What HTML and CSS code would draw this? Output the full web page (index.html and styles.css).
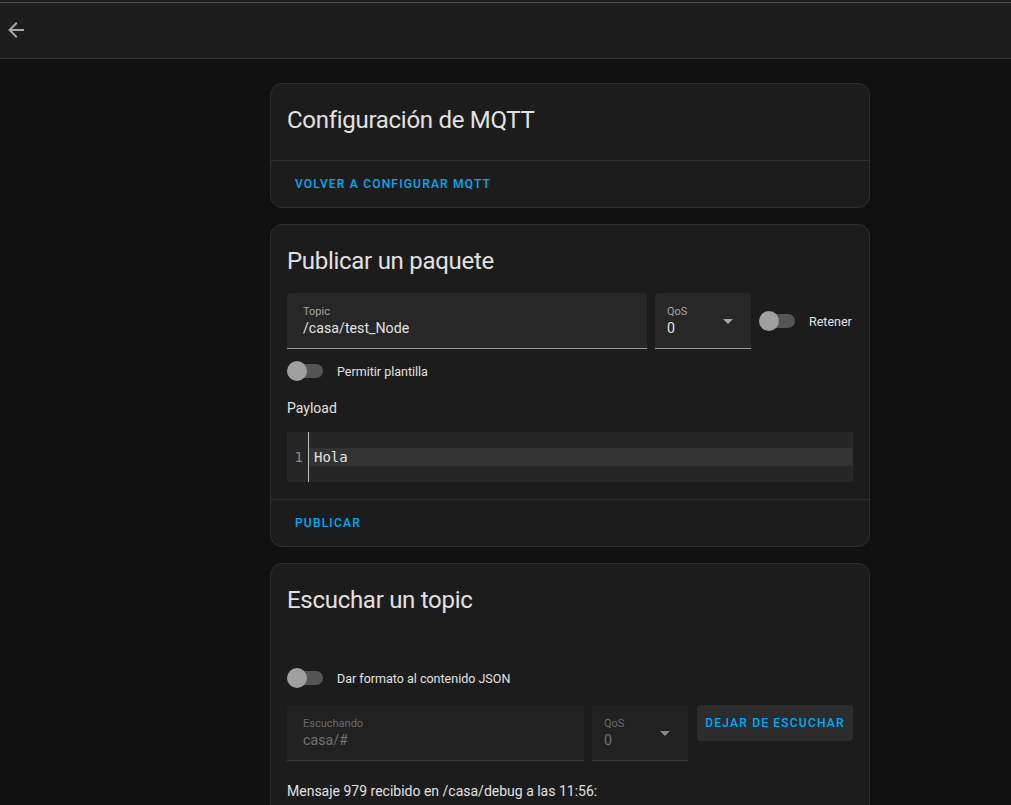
FILE: index.html
```html
<!DOCTYPE html>
<html lang="es">
<head>
<meta charset="utf-8">
<title>MQTT</title>
<link rel="stylesheet" href="styles.css">
</head>
<body>
<div class="topline"></div>
<header class="toolbar">
  <button class="icon-btn" aria-label="Atrás">
    <svg viewBox="0 0 24 24" width="24" height="24"><path d="M20,11V13H8L13.5,18.5L12.08,19.92L4.16,12L12.08,4.08L13.5,5.5L8,11H20Z"/></svg>
  </button>
</header>
<main class="content">
  <section class="card">
    <div class="card-header">Configuración de MQTT</div>
    <div class="card-actions"><span class="btn">Volver a configurar MQTT</span></div>
  </section>

  <section class="card">
    <div class="card-header with-content">Publicar un paquete</div>
    <div class="card-content publish">
      <div class="row">
        <div class="field topic">
          <span class="field-label">Topic</span>
          <span class="field-value">/casa/test_Node</span>
        </div>
        <div class="field qos">
          <span class="field-label">QoS</span>
          <span class="field-value">0</span>
          <span class="arrow"></span>
        </div>
        <div class="switch-row">
          <span class="switch"><span class="track"></span><span class="thumb"></span></span>
          <span class="switch-label retain">Retener</span>
        </div>
      </div>
      <div class="switch-row template">
        <span class="switch"><span class="track"></span><span class="thumb"></span></span>
        <span class="switch-label">Permitir plantilla</span>
      </div>
      <p class="payload-label">Payload</p>
      <div class="editor">
        <div class="gutter">1</div>
        <div class="lines"><div class="line active">Hola</div></div>
      </div>
    </div>
    <div class="card-actions"><span class="btn">Publicar</span></div>
  </section>

  <section class="card">
    <div class="card-header with-content">Escuchar un topic</div>
    <div class="card-content listen">
      <div class="switch-row json">
        <span class="switch"><span class="track"></span><span class="thumb"></span></span>
        <span class="switch-label">Dar formato al contenido JSON</span>
      </div>
      <div class="row">
        <div class="field disabled listening">
          <span class="field-label">Escuchando</span>
          <span class="field-value">casa/#</span>
        </div>
        <div class="field disabled qos">
          <span class="field-label">QoS</span>
          <span class="field-value">0</span>
          <span class="arrow"></span>
        </div>
        <span class="btn raised">Dejar de escuchar</span>
      </div>
      <p class="message">Mensaje 979 recibido en /casa/debug a las 11:56:</p>
    </div>
  </section>
</main>
</body>
</html>
```

FILE: styles.css
```css
* { box-sizing: border-box; }
html, body { margin: 0; padding: 0; }
body {
  background: #111111;
  font-family: Roboto, "Noto Sans", sans-serif;
  color: #e1e1e1;
  height: 805px;
  overflow: hidden;
}
.topline {
  height: 3px;
  background: #1c1c1c;
  border-bottom: 1px solid #4a4a4a;
}
.toolbar {
  height: 56px;
  background: #1d1d1d;
  border-bottom: 1px solid #353535;
  display: flex;
  align-items: center;
}
.icon-btn {
  background: none;
  border: 0;
  padding: 0 0 0 4px;
  display: flex;
  margin-top: -1px;
}
.icon-btn svg { fill: #a8a8a8; }
.content {
  padding: 24px 0 0 270px;
  display: flex;
  flex-direction: column;
  gap: 16px;
}
.card {
  width: 600px;
  background: #1c1c1c;
  border: 1px solid #2f2f2f;
  border-radius: 12px;
}
.card-header {
  font-size: 24px;
  line-height: 48px;
  padding: 12px 16px 16px;
  color: #e1e1e1;
  letter-spacing: -0.012em;
}
.card-header.with-content { padding-bottom: 8px; }
.card-content { padding: 0 16px 16px; }
.card-content.publish { padding-bottom: 17px; }
.card-actions {
  border-top: 1px solid #2f2f2f;
  padding: 5px 16px;
  display: flex;
}
.btn {
  height: 36px;
  display: inline-flex;
  align-items: center;
  padding: 0 8px;
  color: #03a9f4;
  font-size: 12px;
  font-weight: 500;
  letter-spacing: 1.2px;
  text-transform: uppercase;
  border-radius: 4px;
}
.row {
  display: flex;
  gap: 8px;
  align-items: flex-start;
}
.field {
  position: relative;
  height: 56px;
  background: #272727;
  border-radius: 4px 4px 0 0;
  border-bottom: 1px solid #9a9a9a;
  padding: 12px 16px 0;
  display: flex;
  flex-direction: column;
}
.field.topic { width: 360px; }
.field.qos { width: 96px; padding-left: 12px; }
.field.listening { width: 297px; }
.field-label { font-size: 11px; line-height: 14px; color: #a3a3a3; }
.field-value { font-size: 14.2px; line-height: 18px; color: #e1e1e1; }
.field.disabled { background: #212121; border-bottom-color: #3a3a3a; }
.field.disabled .field-label { color: #6a6a6a; }
.field.disabled .field-value { color: #717171; }
.arrow {
  position: absolute;
  right: 18px;
  top: 26px;
  width: 0; height: 0;
  border-left: 5px solid transparent;
  border-right: 5px solid transparent;
  border-top: 5px solid #a8a8a8;
}
.field.disabled .arrow { border-top-color: #8a8a8a; }
.switch-row {
  display: flex;
  align-items: center;
  height: 56px;
}
.switch {
  position: relative;
  width: 36px;
  height: 20px;
  display: inline-block;
  flex: none;
}
.track {
  position: absolute;
  left: 2px; right: 0; top: 3px;
  height: 14px;
  border-radius: 7px;
  background: #555555;
}
.thumb {
  position: absolute;
  left: 0; top: 0;
  width: 20px; height: 20px;
  border-radius: 50%;
  background: #a0a0a0;
}
.switch-label { font-size: 12.5px; padding-left: 14px; color: #e1e1e1; }
.template { height: 44px; margin-top: 0; }
.payload-label { margin: 5px 0 0; font-size: 14px; line-height: 20px; }
.editor {
  margin-top: 14px;
  background: #262626;
  display: flex;
  height: 50px;
}
.gutter {
  width: 22px;
  border-right: 1px solid #bdbdbd;
  font-family: "DejaVu Sans Mono", monospace;
  font-size: 14px;
  color: #8a8a8a;
  text-align: right;
  padding: 16px 5px 0 0;
  line-height: 18px;
}
.lines { flex: 1; padding-top: 16px; }
.line {
  font-family: "DejaVu Sans Mono", monospace;
  font-size: 14px;
  line-height: 18px;
  padding-left: 5px;
  color: #e1e1e1;
}
.line.active { background: #333333; }
.listen { padding-top: 32px; }
.json { height: 28px; margin-bottom: 13px; }
.btn.raised {
  background: #2c2c2c;
  width: 156px;
  justify-content: center;
  padding: 0;
  margin-left: 1px;
}
.message { margin: 20px 0 0; font-size: 14px; line-height: 20px; }
```
